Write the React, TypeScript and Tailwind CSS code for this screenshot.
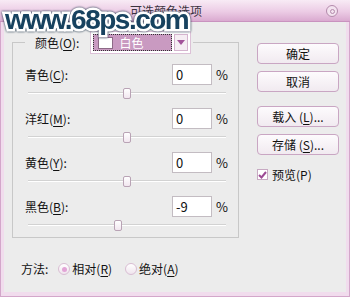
import React from "react";

const rows = [
  { name: "青色", key: "C", value: 0 },
  { name: "洋红", key: "M", value: 0 },
  { name: "黄色", key: "Y", value: 0 },
  { name: "黑色", key: "B", value: -9 },
];

function Key({ k }: { k: string }) {
  return <span className="underline underline-offset-2 decoration-1">{k}</span>;
}

function Slider({ value }: { value: number }) {
  return (
    <div className="relative ml-[15px] mr-[12px] h-[21px]">
      <div className="absolute left-0 right-0 top-[7px] h-[2px] border-b border-white bg-[#d2d2d2]" />
      <div
        className="absolute top-[3px] -ml-[4px] h-[11px] w-[8px] rounded-[2px] border border-[#b9a3b5] bg-[linear-gradient(#ffffff,#f1e6ef)]"
        style={{ left: `${50 + value / 2}%` }}
      />
    </div>
  );
}

function Button({ children }: { children: React.ReactNode }) {
  return (
    <div className="flex h-[21px] w-[82px] items-center justify-center rounded-[4px] border border-[#c9a6c3] bg-[linear-gradient(#fdfbfd,#f1eaf0)] text-[12px] text-[#111]">
      {children}
    </div>
  );
}

function Radio({ checked, children }: { checked?: boolean; children: React.ReactNode }) {
  return (
    <div className="flex items-center gap-[2px]">
      <div className="flex h-[12px] w-[12px] items-center justify-center rounded-full border border-[#d9bdd3] bg-[linear-gradient(#ffffff,#efe4ed)]">
        {checked && <div className="h-[5px] w-[5px] rounded-full bg-[#e2a4d6]" />}
      </div>
      <span>{children}</span>
    </div>
  );
}

export default function App() {
  return (
    <div className="relative flex h-[297px] w-[350px] flex-col overflow-hidden [font-family:'Noto_Sans_CJK_SC','Noto_Sans',sans-serif] text-[12px] text-[#111]">
      {/* title bar */}
      <div className="relative flex h-[22px] shrink-0 items-center justify-center border-b border-[#c993bf] bg-[linear-gradient(#f8ebf5,#ecccE5_55%,#daaad0)] pr-[18px]">
        <span className="text-[12px] text-[#3b3340]">可选颜色选项</span>
        <div className="absolute right-[12px] top-[5px] flex h-[12px] w-[12px] items-center justify-center rounded-full border border-[#b38aab] bg-[#f3e2ef]">
          <div className="h-[5px] w-[5px] rounded-full border border-[#b38aab]" />
        </div>
      </div>

      {/* frame */}
      <div className="flex flex-1 border-x border-b border-[#d3a7ca] bg-[#f1dced] px-[3px] pb-[4px]">
        <div className="flex flex-1 bg-[#ececec] pl-[8px] pr-[7px]">
          {/* left column */}
          <div className="flex w-[227px] flex-col pt-[9px]">
            <fieldset className="h-[207px] border border-[#c8c8c8] pt-[10px]">
              <legend className="ml-[12px] flex items-center pl-[10px] pr-[2px]">
                <span className="mr-[11px]">
                  颜色(<Key k="O" />):
                </span>
                <div className="flex h-[23px] w-[101px] items-stretch gap-[2px] border border-[#dcc1d7] bg-white p-[2px]">
                  <div className="flex flex-1 items-center border border-dotted border-[#333] bg-[#c99ac1] pl-[4px]">
                    <div className="h-[12px] w-[15px] border border-[#8d6a87] bg-white" />
                    <span className="ml-[6px] text-[12px] text-white">白色</span>
                  </div>
                  <div className="flex w-[14px] items-center justify-center border border-[#d4b4ce] bg-[#f5edf3]">
                    <svg width="8" height="5" viewBox="0 0 8 5">
                      <path d="M0 0 L8 0 L4 5 Z" fill="#a2539a" />
                    </svg>
                  </div>
                </div>
              </legend>

              <div className="flex flex-col gap-[2px]">
                {rows.map((r) => (
                  <div key={r.key} className="flex flex-col">
                    <div className="flex h-[21px] items-center pr-[12px]">
                      <span className="flex-1 pl-[12px]">
                        {r.name}(<Key k={r.key} />):
                      </span>
                      <div className="flex h-[21px] w-[40px] items-center border border-[#c3bcc2] bg-white pl-[3px] text-[13px]">
                        {r.value}
                      </div>
                      <span className="ml-[4px] w-[10px] text-[13px]">%</span>
                    </div>
                    <Slider value={r.value} />
                  </div>
                ))}
              </div>
            </fieldset>

            <div className="mt-[23px] flex h-[16px] items-center pl-[9px]">
              <span className="mr-[10px]">方法:</span>
              <Radio checked>
                相对(<Key k="R" />)
              </Radio>
              <div className="w-[13px]" />
              <Radio>
                绝对(<Key k="A" />)
              </Radio>
            </div>
          </div>

          {/* right column */}
          <div className="ml-[18px] flex flex-col pt-[21px]">
            <Button>确定</Button>
            <div className="h-[7px]" />
            <Button>取消</Button>
            <div className="h-[14px]" />
            <Button>
              载入 (<Key k="L" />)...
            </Button>
            <div className="h-[7px]" />
            <Button>
              存储 (<Key k="S" />)...
            </Button>
            <div className="mt-[13px] flex h-[13px] items-center gap-[4px]">
              <div className="flex h-[11px] w-[11px] items-center justify-center border border-[#c7a9c2] bg-white">
                <svg width="9" height="8" viewBox="0 0 9 8">
                  <path d="M1 4 L3.5 6.5 L8 1" stroke="#9c4a94" strokeWidth="2" fill="none" />
                </svg>
              </div>
              <span>预览(P)</span>
            </div>
          </div>
        </div>
      </div>

      {/* watermark */}
      <div className="pointer-events-none absolute left-[5px] top-[-1px] [font-family:'Liberation_Sans',Arial,sans-serif] text-[28px] font-bold tracking-[-1.5px] text-[#17425f] [-webkit-text-stroke:5px_#ffffff] [paint-order:stroke_fill] [filter:drop-shadow(0_0_1px_#0b2238)]">
        www.68ps.com
      </div>
    </div>
  );
}
